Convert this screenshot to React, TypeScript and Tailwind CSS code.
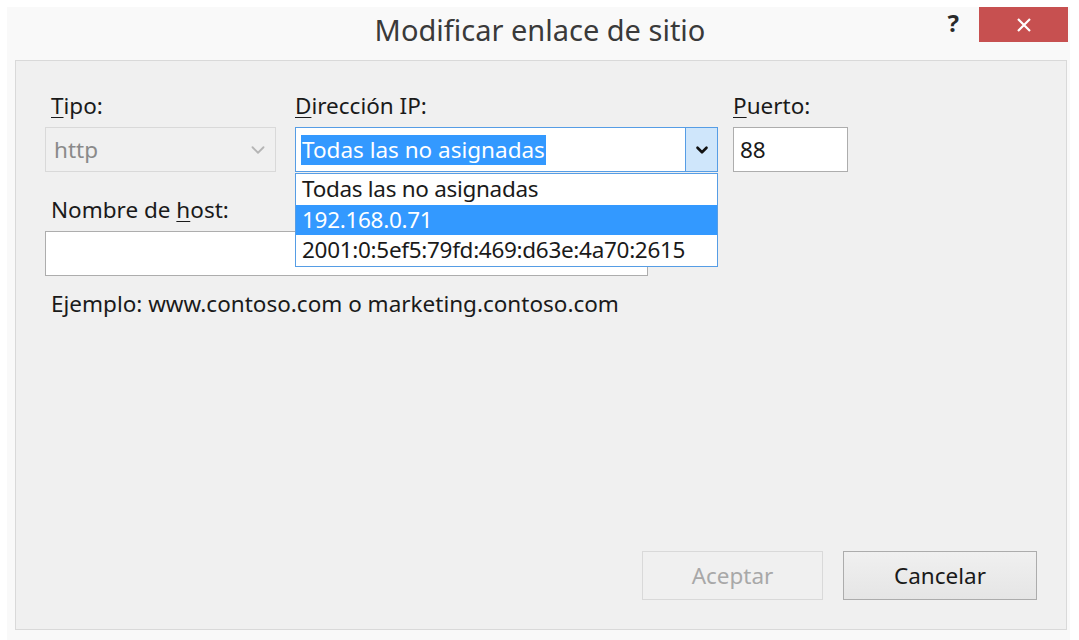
import { ChevronDown } from 'lucide-react'

const font = { fontFamily: '"Noto Sans", "Open Sans", sans-serif' }

function Label({ pre = '', accel, rest, indent = false }: { pre?: string; accel: string; rest: string; indent?: boolean }) {
    return (
        <div className={`h-[32px] leading-[32px] text-[22.5px] text-[#1a1a1a] mb-[5px] whitespace-nowrap ${indent ? 'pl-[6px]' : ''}`}>
            {pre}
            <span className="underline underline-offset-[3px] decoration-1">{accel}</span>
            {rest}
        </div>
    )
}

export default function App() {
    const addresses = ['Todas las no asignadas', '192.168.0.71', '2001:0:5ef5:79fd:469:d63e:4a70:2615']
    const active = 1

    return (
        <div className="w-[1079px] h-[640px] bg-white pl-[7px] pt-[7px] overflow-hidden" style={font}>
            <div className="w-[1063px] h-[640px] bg-[#f9f9f9] flex flex-col">
                {/* title bar */}
                <div className="relative h-[53px] flex items-start justify-center">
                    <div className="text-[29px] leading-[46px] text-[#3a3a3a] pl-[3px]">Modificar enlace de sitio</div>
                    <div className="absolute right-0 top-0 flex items-start">
                        <span className="text-[24px] font-bold text-[#2a2a2a] leading-[30px] mr-[20px] mt-[1px]">?</span>
                        <button className="w-[89px] h-[35px] bg-[#c75050] flex items-center justify-center">
                            <svg width="16" height="16" viewBox="0 0 16 16">
                                <path d="M2 2 L14 14 M14 2 L2 14" stroke="white" strokeWidth="2.2" />
                            </svg>
                        </button>
                        <div className="w-[2px]" />
                    </div>
                </div>

                {/* dialog body */}
                <div className="ml-[8px] mr-[3px] h-[570px] border border-[#d9d9d9] bg-[#f0f0f0] p-[29px] flex flex-col">
                    <div className="flex">
                        <div className="w-[231px] mr-[19px]">
                            <Label accel="T" rest="ipo:" indent />
                            <div className="h-[45px] border border-[#d9d9d9] flex items-center justify-between pl-[8px] pr-[6px] text-[22.5px] text-[#8a8a8a]">
                                <span>http</span>
                                <ChevronDown size={22} strokeWidth={2} color="#b5b5b5" />
                            </div>
                        </div>

                        <div className="w-[423px] mr-[15px] relative">
                            <Label accel="D" rest="irección IP:" />
                            <div className="h-[45px] border border-[#569de5] bg-white flex">
                                <div className="flex-1 flex items-center pl-[5px]">
                                    <span className="bg-[#3399ff] text-white text-[22.5px] leading-[30px] px-[1px]">Todas las no asignadas</span>
                                </div>
                                <div className="w-[32px] bg-[#cfe6fb] border-l border-[#569de5] flex items-center justify-center">
                                    <ChevronDown size={18} strokeWidth={3.5} color="#111" />
                                </div>
                            </div>
                            {/* open list */}
                            <div className="absolute left-0 right-0 top-[83px] bg-white border border-[#569de5] z-10">
                                {addresses.map((a, i) => (
                                    <div
                                        key={a}
                                        className={`h-[30.5px] leading-[30px] pl-[6px] text-[22.5px] tracking-[-0.3px] ${i === active ? 'bg-[#3399ff] text-white' : 'text-[#1a1a1a]'}`}
                                    >
                                        {a}
                                    </div>
                                ))}
                            </div>
                        </div>

                        <div className="w-[115px]">
                            <Label accel="P" rest="uerto:" />
                            <div className="h-[45px] border border-[#adadad] bg-white flex items-center pl-[6px] text-[22.5px] text-[#1a1a1a]">
                                88
                            </div>
                        </div>
                    </div>

                    <div className="mt-[22px]">
                        <Label pre="Nombre de " accel="h" rest="ost:" indent />
                        <div className="w-[603px] h-[45px] border border-[#adadad] bg-white" />
                    </div>

                    <div className="mt-[12px] pl-[6px] text-[22.5px] leading-[32px] text-[#1a1a1a]">
                        Ejemplo: www.contoso.com o marketing.contoso.com
                    </div>

                    <div className="mt-auto flex justify-end gap-[20px]">
                        <button className="w-[181px] h-[49px] border border-[#d9d9d9] bg-[#f0f0f0] text-[22.5px] text-[#a8a8a8]">
                            Aceptar
                        </button>
                        <button className="w-[194px] h-[49px] border border-[#acacac] bg-gradient-to-b from-[#f0f0f0] to-[#e5e5e5] text-[22.5px] text-[#1a1a1a]">
                            Cancelar
                        </button>
                    </div>
                </div>
            </div>
        </div>
    )
}
